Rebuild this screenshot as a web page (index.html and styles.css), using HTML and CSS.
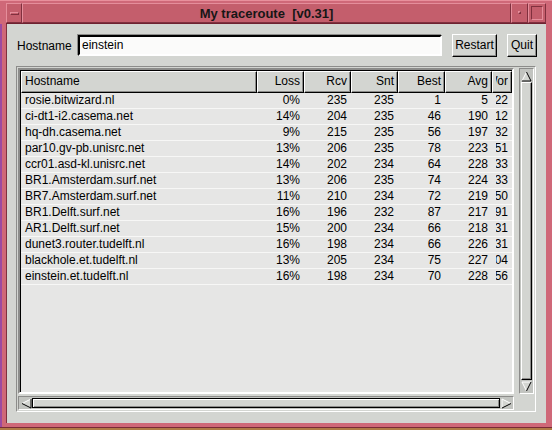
FILE: index.html
```html
<!DOCTYPE html>
<html>
<head>
<meta charset="utf-8">
<title>My traceroute</title>
<link rel="stylesheet" href="styles.css">
</head>
<body>
<div class="win">
  <div class="titlebar">
    <div class="tbtn tb-menu"><span class="menubar"></span></div>
    <div class="title">My traceroute&nbsp; [v0.31]</div>
    <div class="tbtn tb-min"><span class="dot"></span></div>
    <div class="tbtn tb-max"><span class="sq"></span></div>
  </div>
  <div class="mid">
    <div class="client">
      <div class="toolbar">
        <span class="lbl">Hostname</span>
        <div class="entry">einstein</div>
        <div class="btn btn-restart">Restart</div>
        <div class="btn btn-quit">Quit</div>
      </div>
      <div class="scrollwin">
        <div class="listrow">
          <div class="clist">
            <div class="row head">
              <div class="c c-host">Hostname</div>
              <div class="c num">Loss</div>
              <div class="c num">Rcv</div>
              <div class="c num">Snt</div>
              <div class="c num">Best</div>
              <div class="c num">Avg</div>
              <div class="c wor"><span class="clip">Wor</span></div>
            </div>
            <div class="row"><div class="c c-host">rosie.bitwizard.nl</div><div class="c num">0%</div><div class="c num">235</div><div class="c num">235</div><div class="c num">1</div><div class="c num">5</div><div class="c wor"><span class="clip">522</span></div></div>
            <div class="row"><div class="c c-host">ci-dt1-i2.casema.net</div><div class="c num">14%</div><div class="c num">204</div><div class="c num">235</div><div class="c num">46</div><div class="c num">190</div><div class="c wor"><span class="clip">412</span></div></div>
            <div class="row"><div class="c c-host">hq-dh.casema.net</div><div class="c num">9%</div><div class="c num">215</div><div class="c num">235</div><div class="c num">56</div><div class="c num">197</div><div class="c wor"><span class="clip">432</span></div></div>
            <div class="row"><div class="c c-host">par10.gv-pb.unisrc.net</div><div class="c num">13%</div><div class="c num">206</div><div class="c num">235</div><div class="c num">78</div><div class="c num">223</div><div class="c wor"><span class="clip">451</span></div></div>
            <div class="row"><div class="c c-host">ccr01.asd-kl.unisrc.net</div><div class="c num">14%</div><div class="c num">202</div><div class="c num">234</div><div class="c num">64</div><div class="c num">228</div><div class="c wor"><span class="clip">433</span></div></div>
            <div class="row"><div class="c c-host">BR1.Amsterdam.surf.net</div><div class="c num">13%</div><div class="c num">206</div><div class="c num">235</div><div class="c num">74</div><div class="c num">224</div><div class="c wor"><span class="clip">433</span></div></div>
            <div class="row"><div class="c c-host">BR7.Amsterdam.surf.net</div><div class="c num">11%</div><div class="c num">210</div><div class="c num">234</div><div class="c num">72</div><div class="c num">219</div><div class="c wor"><span class="clip">450</span></div></div>
            <div class="row"><div class="c c-host">BR1.Delft.surf.net</div><div class="c num">16%</div><div class="c num">196</div><div class="c num">232</div><div class="c num">87</div><div class="c num">217</div><div class="c wor"><span class="clip">491</span></div></div>
            <div class="row"><div class="c c-host">AR1.Delft.surf.net</div><div class="c num">15%</div><div class="c num">200</div><div class="c num">234</div><div class="c num">66</div><div class="c num">218</div><div class="c wor"><span class="clip">431</span></div></div>
            <div class="row"><div class="c c-host">dunet3.router.tudelft.nl</div><div class="c num">16%</div><div class="c num">198</div><div class="c num">234</div><div class="c num">66</div><div class="c num">226</div><div class="c wor"><span class="clip">431</span></div></div>
            <div class="row"><div class="c c-host">blackhole.et.tudelft.nl</div><div class="c num">13%</div><div class="c num">205</div><div class="c num">234</div><div class="c num">75</div><div class="c num">227</div><div class="c wor"><span class="clip">404</span></div></div>
            <div class="row"><div class="c c-host">einstein.et.tudelft.nl</div><div class="c num">16%</div><div class="c num">198</div><div class="c num">234</div><div class="c num">70</div><div class="c num">228</div><div class="c wor"><span class="clip">456</span></div></div>
          </div>
          <div class="vscroll">
            <div class="arrow arr-v">
              <svg width="11" height="11" viewBox="0 0 11 11"><polygon points="5.5,1 10,10 1,10" fill="#d3d5d1"/><polyline points="1,10 5.5,1" fill="none" stroke="#ffffff" stroke-width="1"/><polyline points="5.5,1 10,10 1,10" fill="none" stroke="#000" stroke-width="1"/></svg>
            </div>
            <div class="slider-v"></div>
            <div class="arrow arr-v">
              <svg width="11" height="11" viewBox="0 0 11 11"><polygon points="1,1 10,1 5.5,10" fill="#d3d5d1"/><polyline points="5.5,10 1,1 10,1" fill="none" stroke="#ffffff" stroke-width="1"/><polyline points="10,1 5.5,10" fill="none" stroke="#000" stroke-width="1"/></svg>
            </div>
          </div>
        </div>
        <div class="hscroll">
          <div class="arrow arr-h">
            <svg width="11" height="11" viewBox="0 0 11 11"><polygon points="1,5.5 10,1 10,10" fill="#d3d5d1"/><polyline points="10,1 1,5.5" fill="none" stroke="#ffffff" stroke-width="1"/><polyline points="1,5.5 10,10 10,1" fill="none" stroke="#000" stroke-width="1"/></svg>
          </div>
          <div class="slider-h"></div>
          <div class="arrow arr-h">
            <svg width="11" height="11" viewBox="0 0 11 11"><polygon points="1,1 10,5.5 1,10" fill="#d3d5d1"/><polyline points="1,10 1,1 10,5.5" fill="none" stroke="#ffffff" stroke-width="1"/><polyline points="10,5.5 1,10" fill="none" stroke="#000" stroke-width="1"/></svg>
          </div>
        </div>
      </div>
    </div>
  </div>
</div>
</body>
</html>
```

FILE: styles.css
```css
* { box-sizing: border-box; }
html, body { margin: 0; padding: 0; }
body {
  width: 552px;
  height: 430px;
  overflow: hidden;
  background: #b07a46;
  font-family: "Liberation Sans", Arial, sans-serif;
  font-size: 12px;
  color: #000;
}
.win {
  width: 552px;
  height: 428px;
  background: #cf6878;
  border-top: 1px solid #e8909c;
  border-bottom: 1px solid #7a2a36;
  display: flex;
  flex-direction: column;
}
.titlebar {
  display: flex;
  height: 21px;
  margin: 2px 6px 0 6px;
  border-bottom: 1px solid #6e2230;
}
.tbtn, .title {
  background: #c45e6c;
  border: 1px solid;
  border-color: #e58e9b #80303e #80303e #e58e9b;
  position: relative;
}
.tb-menu { width: 16px; }
.tb-min { width: 17px; }
.tb-max { width: 18px; }
.title {
  flex: 1;
  text-align: center;
  font-size: 13px;
  font-weight: bold;
  line-height: 19px;
  color: #161616;
}
.menubar {
  position: absolute;
  left: 3px;
  top: 8px;
  width: 9px;
  height: 3px;
  border: 1px solid;
  border-color: #e58e9b #80303e #80303e #e58e9b;
}
.dot {
  position: absolute;
  left: 6px;
  top: 7px;
  width: 3px;
  height: 3px;
  border: 1px solid;
  border-color: #e58e9b #80303e #80303e #e58e9b;
}
.sq {
  position: absolute;
  left: 2px;
  top: 2px;
  width: 12px;
  height: 14px;
  border: 1px solid;
  border-color: #80303e #e58e9b #e58e9b #80303e;
}
.mid {
  flex: 1;
  display: flex;
  border-left: 2px solid #9c4aa0;
  padding: 0 6px 4px 4px;
}
.client {
  flex: 1;
  background: #d3d5d1;
  border-left: 1px solid #80303e;
  display: flex;
  flex-direction: column;
  padding: 10px 9px 11px 9px;
}
.toolbar {
  display: flex;
  align-items: center;
  height: 23px;
}
.lbl {
  width: 62px;
  padding-left: 1px;
}
.entry {
  width: 364px;
  height: 21px;
  background: #fbfbfa;
  border: 2px solid;
  border-color: #000 #fff #fff #000;
  box-shadow: -1px -1px 0 #8c8c8a;
  padding-left: 2px;
  line-height: 17px;
}
.btn {
  height: 23px;
  margin-left: 10px;
  border: 1px solid;
  border-color: #fff #000 #000 #fff;
  box-shadow: inset -1px -1px 0 #8c8c8a;
  background: #d3d5d1;
  text-align: center;
  line-height: 21px;
}
.btn-restart { width: 45px; }
.btn-quit { width: 30px; }
.scrollwin {
  margin-top: 9px;
  flex: 1;
  width: 520px;
  border: 1px solid;
  border-color: #8c8c8a #fff #fff #8c8c8a;
  padding: 1px;
  display: flex;
  flex-direction: column;
}
.listrow {
  flex: 1;
  display: flex;
}
.clist {
  width: 496px;
  background: #e6e6e5;
  border: 2px solid;
  border-color: #8c8c8a #fff #fff #8c8c8a;
  box-shadow: inset 1px 1px 0 #000;
  padding: 1px 0 0 1px;
}
.row {
  display: grid;
  grid-template-columns: 236px 47px 47px 47px 47px 47px 20px;
  height: 16px;
  border-bottom: 1px solid #f7f7f6;
}
.c {
  overflow: hidden;
  white-space: nowrap;
  line-height: 15px;
  padding: 0 4px;
}
.num {
  display: flex;
  justify-content: flex-end;
}
.wor {
  display: flex;
  justify-content: flex-end;
  padding: 0 4px 0 0;
}
.clip {
  display: block;
  width: 12px;
  overflow: hidden;
  direction: rtl;
  white-space: nowrap;
}
.row.head {
  height: 22px;
  border-bottom: 0;
  background: #d3d5d1;
}
.row.head .c {
  border: 1px solid;
  border-color: #fff #000 #000 #fff;
  box-shadow: inset -1px -1px 0 #8c8c8a;
  line-height: 19px;
  padding: 0 3px 0 3px;
}
.row.head .wor .clip { width: 13px; }
.vscroll {
  margin-left: 5px;
  width: 15px;
  border: 1px solid;
  border-color: #8c8c8a #fff #fff #8c8c8a;
  background: #c2c4c0;
  display: flex;
  flex-direction: column;
  padding: 1px;
}
.arrow {
  display: flex;
  align-items: center;
  justify-content: center;
}
.arr-v { height: 12px; }
.slider-v {
  flex: 1;
  background: #d3d5d1;
  border: 1px solid;
  border-color: #fff #000 #000 #fff;
  box-shadow: inset -1px -1px 0 #8c8c8a;
}
.hscroll {
  margin-top: 2px;
  width: 496px;
  height: 14px;
  border: 1px solid;
  border-color: #8c8c8a #fff #fff #8c8c8a;
  background: #c2c4c0;
  display: flex;
  padding: 1px;
}
.arr-h { width: 12px; }
.slider-h {
  flex: 1;
  background: #d3d5d1;
  border: 1px solid #000;
  box-shadow: inset 1px 1px 0 #fff, inset -1px -1px 0 #8c8c8a;
}
```
